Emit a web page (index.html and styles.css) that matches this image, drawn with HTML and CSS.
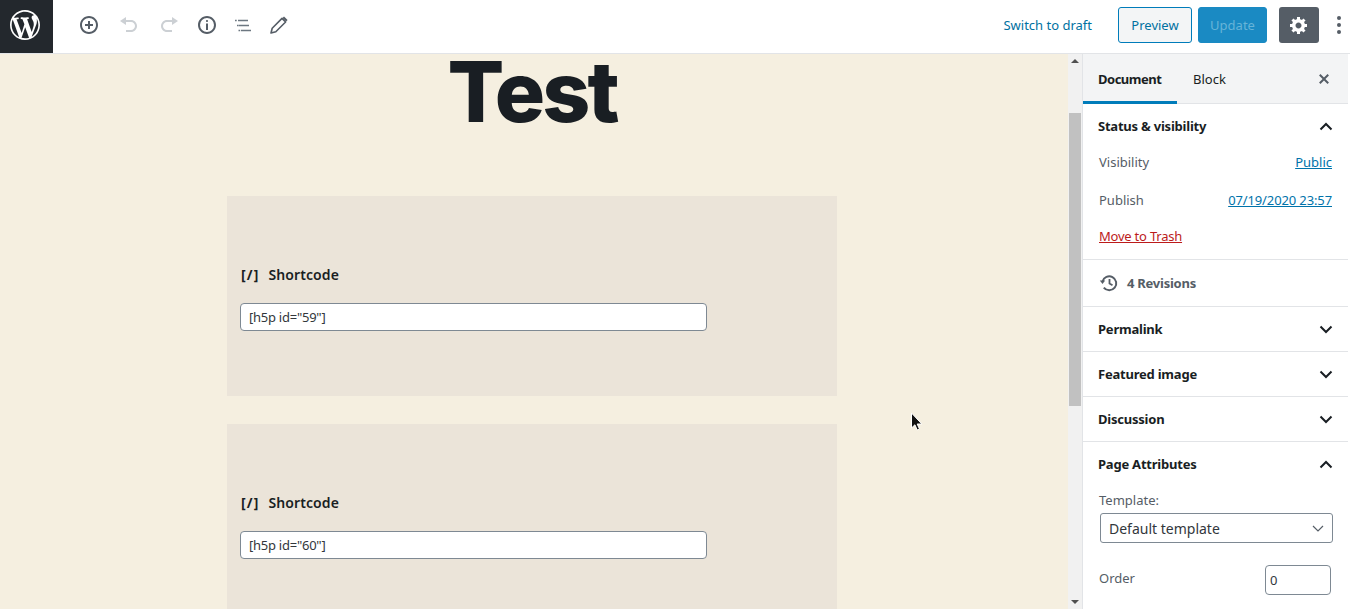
FILE: index.html
```html
<!DOCTYPE html>
<html lang="en">
<head>
<meta charset="utf-8">
<title>Edit Page</title>
<link rel="stylesheet" href="styles.css">
</head>
<body>
<div class="app">
  <header class="topbar">
    <a class="logo" href="#" aria-label="WordPress">
      <svg width="36" height="36" viewBox="-2 -2 24 24" fill="#fff"><path d="M20 10c0-5.51-4.49-10-10-10C4.48 0 0 4.49 0 10c0 5.52 4.48 10 10 10 5.51 0 10-4.48 10-10zM7.78 15.37L4.37 6.22c.55-.02 1.17-.08 1.17-.08.5-.06.44-1.13-.06-1.11 0 0-1.45.11-2.37.11-.18 0-.37 0-.58-.01C4.12 2.69 6.87 1.11 10 1.11c2.33 0 4.45.87 6.05 2.34-.68-.11-1.65.39-1.65 1.58 0 .74.45 1.36.9 2.1.35.61.55 1.36.55 2.46 0 1.49-1.4 5-1.4 5l-3.03-8.37c.54-.02.82-.17.82-.17.5-.05.44-1.25-.06-1.22 0 0-1.44.12-2.38.12-.87 0-2.33-.12-2.33-.12-.5-.03-.56 1.2-.06 1.22l.92.08 1.26 3.41zM17.41 10c.24-.64.74-1.87.43-4.25.7 1.29 1.05 2.71 1.05 4.25 0 3.29-1.73 6.24-4.4 7.78.97-2.59 1.94-5.2 2.92-7.78zM6.1 18.09C3.12 16.65 1.11 13.53 1.11 10c0-1.3.23-2.48.72-3.59C3.25 10.3 4.67 14.2 6.1 18.09zm4.03-6.63l2.58 6.98c-.86.29-1.76.45-2.71.45-.79 0-1.57-.11-2.29-.33.81-2.38 1.62-4.74 2.42-7.1z"/></svg>
    </a>
    <div class="tools">
      <span class="tool"><svg width="20" height="20" viewBox="0 0 20 20" fill="#555d66"><path d="M10 1c-5 0-9 4-9 9s4 9 9 9 9-4 9-9-4-9-9-9zm0 16c-3.900 0-7-3.100-7-7s3.100-7 7-7 7 3.100 7 7-3.100 7-7 7zm1-11H9v3H6v2h3v3h2v-3h3V9h-3V6z"/></svg></span>
      <span class="tool"><svg width="20" height="20" viewBox="0 0 20 20" fill="#ccd0d4"><path d="M12 5H7V2L1 6l6 4V7h5c2.200 0 4 1.800 4 4s-1.800 4-4 4H7v2h5c3.300 0 6-2.700 6-6s-2.700-6-6-6z"/></svg></span>
      <span class="tool"><svg width="20" height="20" viewBox="0 0 20 20" fill="#ccd0d4"><path d="M8 5h5V2l6 4-6 4V7H8c-2.200 0-4 1.800-4 4s1.800 4 4 4h5v2H8c-3.300 0-6-2.700-6-6s2.700-6 6-6z"/></svg></span>
      <span class="tool t-info"><svg width="20" height="20" viewBox="0 0 20 20" fill="#555d66"><path fill-rule="evenodd" d="M10 1c4.970 0 9 4.030 9 9s-4.030 9-9 9-9-4.030-9-9 4.030-9 9-9zm0 2a7 7 0 1 0 0 14 7 7 0 0 0 0-14zm1 3c0-.55-.45-1-1-1s-1 .45-1 1 .45 1 1 1 1-.45 1-1zm0 9V8.500H9V15h2z"/></svg></span>
      <span class="tool t-list"><svg width="20" height="20" viewBox="0 0 20 20" fill="#6c7781"><path d="M2 4.800h1.700v1.500H2zM5 4.800h10v1.500H5zM4 9.800h1.700v1.500H4zM6 9.800h10v1.500H6zM5.500 14.800h1.700v1.500H5.500zM8 14.800h10v1.500H8z"/></svg></span>
      <span class="tool t-pencil"><svg width="24" height="24" viewBox="0 0 24 24"><path d="M4 20l1.200-4.800L15 5.400 18.600 9l-9.800 9.800z" fill="none" stroke="#555d66" stroke-width="1.600" stroke-linejoin="round"/><path d="M15.500 4.900L17 3.400 20.600 7l-1.500 1.500z" fill="#555d66"/></svg></span>
    </div>
    <div class="actions">
      <a class="draft" href="#">Switch to draft</a>
      <button class="btn preview" type="button">Preview</button>
      <button class="btn update" type="button">Update</button>
      <button class="btn gear" type="button" aria-label="Settings"><svg width="20" height="20" viewBox="0 0 20 20" fill="#fff"><path d="M18 12h-2.180c-.170.700-.440 1.350-.810 1.930l1.540 1.540-2.100 2.100-1.540-1.540c-.580.360-1.230.630-1.910.790V19H8v-2.180c-.680-.160-1.330-.430-1.910-.790l-1.540 1.540-2.120-2.120 1.540-1.540c-.360-.580-.630-1.230-.790-1.910H1V9.030h2.170c.160-.700.440-1.350.800-1.940L2.430 5.550l2.100-2.100 1.540 1.540c.580-.370 1.240-.640 1.930-.810V2h3v2.180c.680.160 1.330.430 1.910.790l1.540-1.540 2.120 2.120-1.540 1.540c.360.590.640 1.240.800 1.940H18V12zm-8.500 1.500c1.660 0 3-1.340 3-3s-1.340-3-3-3-3 1.340-3 3 1.340 3 3 3z"/></svg></button>
      <span class="more"><i></i><i></i><i></i></span>
    </div>
  </header>

  <div class="workspace">
    <main class="editor">
      <h1 class="title">Test</h1>
      <section class="block">
        <div class="block-label"><span class="sc-icon">[/]</span><span>Shortcode</span></div>
        <input class="sc-input" type="text" value="[h5p id=&quot;59&quot;]">
      </section>
      <section class="block">
        <div class="block-label"><span class="sc-icon">[/]</span><span>Shortcode</span></div>
        <input class="sc-input" type="text" value="[h5p id=&quot;60&quot;]">
      </section>
      <svg class="cursor" width="14" height="20" viewBox="0 0 14 20"><path d="M1.500 1v15l3.400-3.200 2.300 5.200 2.300-1-2.300-5h4.600z" fill="#111" stroke="#fff" stroke-width="1"/></svg>
    </main>

    <div class="scrollbar">
      <span class="arrow up"></span>
      <div class="track"><div class="thumb"></div></div>
      <span class="arrow down"></span>
    </div>

    <aside class="sidebar">
      <div class="sidebar-inner">
        <div class="tabs">
          <span class="tab active">Document</span>
          <span class="tab">Block</span>
          <svg class="close" width="20" height="20" viewBox="0 0 20 20" fill="#555d66"><path d="M14.950 6.460L11.410 10l3.540 3.540-1.410 1.410L10 11.420l-3.530 3.530-1.420-1.420L8.580 10 5.050 6.470l1.420-1.420L10 8.580l3.540-3.530z"/></svg>
        </div>

        <section class="panel status">
          <div class="panel-head"><span>Status &amp; visibility</span><svg class="chev" width="14" height="9" viewBox="0 0 14 9"><path d="M1.500 7.500L7 2l5.500 5.500"/></svg></div>
          <div class="row r-vis"><span>Visibility</span><a href="#">Public</a></div>
          <div class="row r-pub"><span>Publish</span><a class="date" href="#">07/19/2020 23:57</a></div>
          <a class="trash" href="#">Move to Trash</a>
        </section>

        <section class="panel revisions">
          <svg width="20" height="20" viewBox="0 0 20 20" fill="none" stroke="#555d66" stroke-width="2"><path d="M3.500 8.500A7 7 0 1 1 4.800 14.700"/><path d="M10.500 6v4.500l3 1.800" stroke-width="1.800"/><path d="M.8 7.500h5.400L3.500 11z" fill="#555d66" stroke="none"/></svg>
          <span>4 Revisions</span>
        </section>

        <section class="panel closed">
          <div class="panel-head"><span>Permalink</span><svg class="chev" width="14" height="9" viewBox="0 0 14 9"><path d="M1.500 1.500L7 7l5.500-5.500"/></svg></div>
        </section>
        <section class="panel closed">
          <div class="panel-head"><span>Featured image</span><svg class="chev" width="14" height="9" viewBox="0 0 14 9"><path d="M1.500 1.500L7 7l5.500-5.500"/></svg></div>
        </section>
        <section class="panel closed">
          <div class="panel-head"><span>Discussion</span><svg class="chev" width="14" height="9" viewBox="0 0 14 9"><path d="M1.500 1.500L7 7l5.500-5.500"/></svg></div>
        </section>

        <section class="panel attrs">
          <div class="panel-head"><span>Page Attributes</span><svg class="chev" width="14" height="9" viewBox="0 0 14 9"><path d="M1.500 7.500L7 2l5.500 5.500"/></svg></div>
          <div class="tpl-label">Template:</div>
          <div class="select"><span>Default template</span><svg width="12" height="7" viewBox="0 0 12 7" fill="none" stroke="#555d66" stroke-width="1.200"><path d="M1 1l5 5 5-5"/></svg></div>
          <div class="order"><span class="order-label">Order</span><input class="order-input" type="text" value="0"></div>
        </section>
      </div>
    </aside>
  </div>
</div>
</body>
</html>
```
FILE: styles.css
```css
* { box-sizing: border-box; }
html, body { margin: 0; height: 100%; overflow: hidden; }
body { font-family: "Noto Sans", "Open Sans", sans-serif; font-size: 13px; color: #191e23; background: #fff; }
a { color: #0073aa; }

.app { height: 609px; display: grid; grid-template-rows: 54px 1fr; }

.topbar { display: flex; align-items: stretch; border-bottom: 1px solid #e2e4e7; background: #fff; }
.logo { width: 53px; height: 53px; background: #23282d; padding: 7px 0 0 7px; display: block; }
.logo svg { display: block; }
.tools { display: flex; align-items: center; padding: 0 0 3px 26px; }
.tool { width: 20px; height: 20px; display: block; margin-right: 20px; }
.tool svg { display: block; }
.t-info { margin-right: 16px; }
.t-list { margin-right: 14px; }
.tool.t-pencil { width: 24px; height: 24px; margin-right: 0; }
.tool:nth-child(3) { margin-right: 18px; }
.actions { margin-left: auto; display: flex; align-items: center; padding-bottom: 3px; }
.draft { text-decoration: none; color: #0071a1; margin-right: 26px; }
.btn { height: 36px; border-radius: 3px; font: inherit; padding: 0; display: flex; align-items: center; justify-content: center; }
.preview { width: 74px; margin-right: 6px; background: #f3f5f6; border: 1px solid #007cba; color: #0071a1; }
.update { width: 69px; margin-right: 12px; background: #1a8ac3; border: 1px solid #1a8ac3; color: #66b4d8; }
.gear { width: 40px; margin-right: 10px; background: #555d66; border: 0; }
.more { width: 20px; margin-right: 1px; display: flex; flex-direction: column; align-items: center; gap: 3px; }
.more i { width: 4px; height: 4px; border-radius: 50%; background: #555d66; display: block; }

.workspace { display: grid; grid-template-columns: 1068px 14px 268px; min-height: 0; }

.editor { position: relative; background: #f5efe0; padding: 0 231px 0 227px; min-height: 0; }
.title { margin: 0 -227px 66px -227px; text-align: center; font-family: Inter, sans-serif; font-weight: 800; font-size: 84px; line-height: 76px; letter-spacing: -3px; color: #191e23; }
.block { width: 610px; height: 200px; background: #ebe4d9; padding: 69px 14px 0 13px; margin-bottom: 28px; flex: none; }
.block-label { display: flex; gap: 9px; padding-left: 1px; font-weight: 600; font-size: 14px; line-height: 20px; letter-spacing: .1px; color: #191e23; margin-bottom: 18px; }
.sc-icon { font-weight: 700; letter-spacing: 1.100px; }
.sc-input { display: block; width: 467px; height: 28px; padding: 0 8px; border: 1px solid #7e8993; border-radius: 4px; background: #fff; font: 13px/26px "Noto Sans", sans-serif; letter-spacing: -.25px; color: #32373c; }
.cursor { position: absolute; left: 910px; top: 358px; }

.scrollbar { background: #f1f1f1; display: flex; flex-direction: column; align-items: center; }
.arrow { display: block; height: 0; width: 0; flex: none; border-left: 4px solid transparent; border-right: 4px solid transparent; }
.arrow.up { border-bottom: 4px solid #505050; margin: 5px 0 50px; }
.arrow.down { border-top: 4px solid #505050; margin: 0 0 5px; }
.track { flex: 1; width: 100%; padding: 0 1px; }
.thumb { height: 293px; background: #c1c1c1; }

.sidebar { background: #fff; border-left: 1px solid #e2e4e7; overflow: hidden; padding-right: 2px; }
.tabs { height: 50px; background: #f3f4f5; border-bottom: 1px solid #e2e4e7; display: flex; align-items: center; }
.tab { height: 49px; display: flex; align-items: center; padding: 0 16px; color: #191e23; }
.tab.active { font-weight: 700; letter-spacing: -.5px; border-bottom: 3px solid #007cba; padding: 3px 15px 0; width: 94px; height: 50px; }
.close { margin-left: auto; margin-right: 14px; }

.panel { border-bottom: 1px solid #e2e4e7; }
.panel-head { height: 44px; display: flex; align-items: center; justify-content: space-between; padding: 0 15px; font-weight: 700; letter-spacing: -.22px; color: #191e23; }
.chev { fill: none; stroke: #191e23; stroke-width: 2; }
.status { height: 156px; }
.row { display: flex; justify-content: space-between; padding: 0 16px; line-height: 20px; color: #555d66; }
.date { letter-spacing: -.12px; }
.r-vis { margin-top: 4px; }
.r-pub { margin-top: 18px; }
.trash { display: block; margin: 16px 0 0 16px; color: #bc1b1b; line-height: 20px; letter-spacing: -.22px; }
.revisions { height: 47px; display: flex; align-items: center; gap: 8px; padding-left: 16px; font-weight: 700; letter-spacing: -.25px; color: #555d66; }
.closed { height: 45px; }
.attrs { border-bottom: 0; }
.tpl-label { padding-left: 16px; line-height: 20px; color: #555d66; margin-top: 4px; }
.select { margin: 3px 15px 0 17px; height: 30px; border: 1px solid #7e8993; border-radius: 3px; display: flex; align-items: center; justify-content: space-between; padding: 0 8px; font-size: 14px; color: #32373c; }
.order { display: flex; align-items: center; justify-content: space-between; padding: 0 17px 0 16px; margin-top: 22px; color: #555d66; }
.order-label { padding-bottom: 4px; }
.order-input { width: 66px; height: 30px; border: 1px solid #7e8993; border-radius: 4px; padding: 0 4px; font: 13px "Noto Sans", sans-serif; color: #32373c; background: #fff; }
```
